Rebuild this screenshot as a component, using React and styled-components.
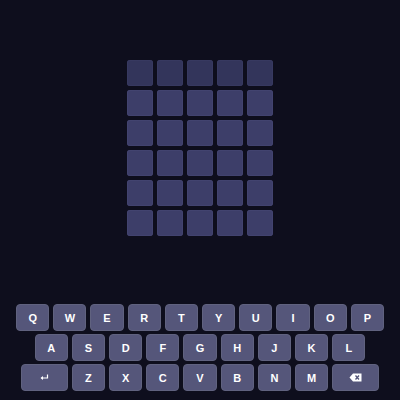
import styled, { createGlobalStyle } from "styled-components";

const GlobalStyle = createGlobalStyle`
  html, body {
    margin: 0;
    padding: 0;
    background: #0e0e1d;
  }
  body {
    font-family: "Liberation Sans", Arial, sans-serif;
  }
`;

const Screen = styled.div`
  width: 400px;
  height: 400px;
  display: flex;
  flex-direction: column;
  align-items: center;
  background: #0e0e1d;
  box-sizing: border-box;
  padding-top: 60px;
`;

const Board = styled.div`
  display: grid;
  grid-template-columns: repeat(5, 26px);
  grid-auto-rows: 26px;
  gap: 4px;
`;

const Tile = styled.div`
  border-radius: 3px;
  background: ${(p) => (p.$dim ? "#33355b" : "#3d3e69")};
  box-shadow: inset 0 0 0 1px ${(p) => (p.$dim ? "#373960" : "#42436f")};
`;

const Keyboard = styled.div`
  margin-top: auto;
  margin-bottom: 9px;
  display: flex;
  flex-direction: column;
  align-items: center;
  gap: 3px;
`;

const Row = styled.div`
  display: flex;
  gap: 4px;
`;

const Key = styled.button`
  width: ${(p) => (p.$wide ? "47px" : "33.2px")};
  height: 27px;
  padding: 0;
  border: 1px solid #60627f;
  border-radius: 4px;
  background: #55567a;
  color: #ffffff;
  font-family: "Liberation Sans", Arial, sans-serif;
  font-weight: 700;
  font-size: 11px;
  display: flex;
  align-items: center;
  justify-content: center;
  box-sizing: border-box;
`;

const EnterIcon = () => (
  <svg width="9" height="7" viewBox="0 0 9 7">
    <path d="M7.5 0.5 V4 H1.5" fill="none" stroke="#fff" strokeWidth="1.2" />
    <path d="M0.5 4 L3 2 V6 Z" fill="#fff" />
  </svg>
);

const BackIcon = () => (
  <svg width="13" height="9" viewBox="0 0 13 9">
    <path d="M4 0.5 H12.5 V8.5 H4 L0.5 4.5 Z" fill="#fff" />
    <path d="M6.5 2.5 L10 6.5 M10 2.5 L6.5 6.5" stroke="#55567a" strokeWidth="1.3" />
  </svg>
);

const rows = [
  ["Q", "W", "E", "R", "T", "Y", "U", "I", "O", "P"],
  ["A", "S", "D", "F", "G", "H", "J", "K", "L"],
];
const bottom = ["Z", "X", "C", "V", "B", "N", "M"];

export default function App() {
  return (
    <>
      <GlobalStyle />
      <Screen>
        <Board>
          {Array.from({ length: 30 }).map((_, i) => (
            <Tile key={i} $dim={i < 5} />
          ))}
        </Board>
        <Keyboard>
          {rows.map((r, i) => (
            <Row key={i}>
              {r.map((k) => (
                <Key key={k}>{k}</Key>
              ))}
            </Row>
          ))}
          <Row>
            <Key $wide>
              <EnterIcon />
            </Key>
            {bottom.map((k) => (
              <Key key={k}>{k}</Key>
            ))}
            <Key $wide>
              <BackIcon />
            </Key>
          </Row>
        </Keyboard>
      </Screen>
    </>
  );
}
